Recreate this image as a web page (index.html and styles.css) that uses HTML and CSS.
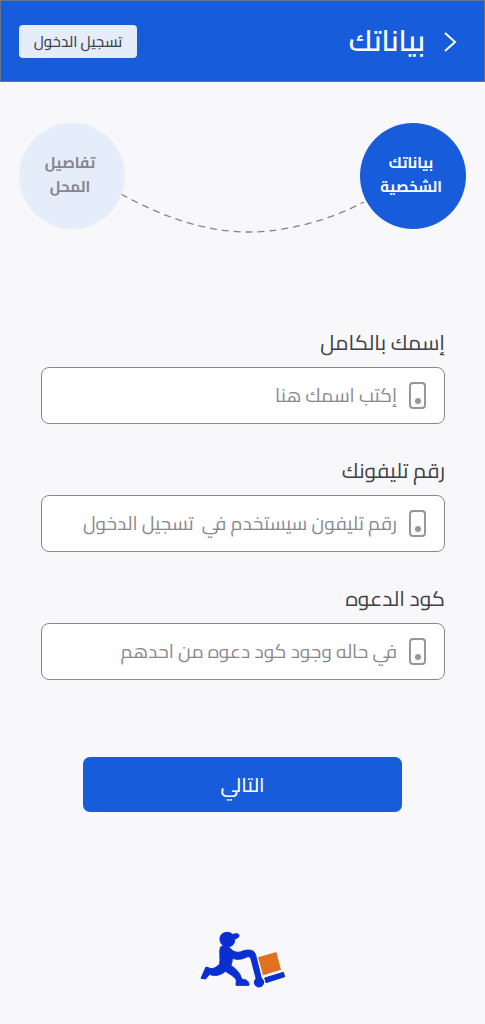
FILE: index.html
```html
<!DOCTYPE html>
<html lang="ar" dir="rtl">
<head>
  <meta charset="UTF-8" />
  <meta name="viewport" content="width=device-width, initial-scale=1.0" />
  <title>بياناتك</title>
  <link rel="stylesheet" href="styles.css">
</head>
<body>
  <header>
    <a href="#" class="back" aria-label="رجوع">
      <svg width="14" height="22" viewBox="0 0 14 22"><path d="M2 2 L12 11 L2 20" /></svg>
    </a>
    <h1>بياناتك</h1>
    <button type="button" class="login">تسجيل الدخول</button>
  </header>
  <main>
    <div class="steps">
      <div class="step active">بياناتك<br>الشخصية</div>
      <svg class="path" viewBox="0 0 248 44" preserveAspectRatio="none">
        <path d="M2 4 C46 28 88 42 130 42 C166 42 210 31 246 12" />
      </svg>
      <div class="step">تفاصيل<br>المحل</div>
    </div>
    <form>
      <label for="name">إسمك بالكامل</label>
      <div class="field">
        <svg width="18" height="28" viewBox="0 0 18 28"><rect x="2" y="1" width="15" height="25" rx="3" /><circle cx="10" cy="19" r="3" /></svg>
        <input type="text" id="name" placeholder="إكتب اسمك هنا">
      </div>
      <label for="phone">رقم تليفونك</label>
      <div class="field">
        <svg width="18" height="28" viewBox="0 0 18 28"><rect x="2" y="1" width="15" height="25" rx="3" /><circle cx="10" cy="19" r="3" /></svg>
        <input type="text" inputmode="tel" id="phone" placeholder="رقم تليفون سيستخدم في  تسجيل الدخول">
      </div>
      <label for="code">كود الدعوه</label>
      <div class="field">
        <svg width="18" height="28" viewBox="0 0 18 28"><rect x="2" y="1" width="15" height="25" rx="3" /><circle cx="10" cy="19" r="3" /></svg>
        <input type="text" id="code" placeholder="في حاله وجود كود دعوه من احدهم">
      </div>
      <button type="submit" class="next">التالي</button>
    </form>
  </main>
  <footer>
    <svg width="86" height="58" viewBox="33 33 258 174">
      <g fill="#0a2fd0" stroke="#0a2fd0" stroke-width="3" stroke-linejoin="round">
        <path d="M93 58 C92 45 102 37 115 37 C121 37 126 39 130 43 L143 41 C152 41 152 51 145 54 L137 57 C138 71 130 80 116 81 C101 80 94 71 93 58 Z" />
        <path d="M94 82 C103 74 118 77 126 88 C133 96 145 98 154 96 C166 90 181 88 192 93 C198 97 200 105 202 113 L217 174 L202 178 L187 121 C185 113 182 109 176 110 C163 116 151 120 138 117 L130 115 C130 125 127 131 126 137 C141 146 153 158 158 177 L171 180 C178 183 180 190 180 196 L141 196 L142 180 C135 168 123 163 109 154 C98 164 83 169 67 165 L61 163 L50 177 L36 175 L51 141 L60 144 C73 149 83 141 92 132 C95 117 90 97 94 82 Z" />
        <circle cx="210" cy="187" r="14" />
        <path d="M227 174 L283 157 L287 170 L231 188 Z" />
      </g>
      <path fill="#e2711f" d="M207 112 L262 96 L276 149 L222 166 Z" />
    </svg>
  </footer>
</body>
</html>
```

FILE: styles.css
```css
* {
  box-sizing: border-box;
}
body {
  margin: 0;
  background: #f8f8fb;
  color: #404045;
  font-family: Cairo, "DejaVu Sans", sans-serif;
}
button, input {
  font-family: inherit;
}
header {
  display: flex;
  align-items: center;
  height: 82px;
  padding: 0 27px 0 18px;
  background: #175cdb;
  border: 1px solid #66738f;
}
.back {
  display: flex;
  margin-top: 2px;
}
.back svg {
  fill: none;
  stroke: #fff;
  stroke-width: 2;
}
h1 {
  margin: 0 18px 0 auto;
  color: #fff;
  font-size: 29px;
  font-weight: 600;
  line-height: 40px;
}
.login {
  width: 118px;
  height: 33px;
  padding: 0;
  border: 0;
  border-radius: 4px;
  background: #e5edfb;
  color: #404045;
  font-size: 15px;
  font-weight: 500;
}
.steps {
  display: flex;
  justify-content: space-between;
  padding: 41px 19px 0;
}
.step {
  display: flex;
  flex: none;
  align-items: center;
  justify-content: center;
  width: 106px;
  height: 106px;
  padding: 0 4px 2px 0;
  border-radius: 50%;
  background: #e5edfb;
  color: #85868b;
  font-size: 15px;
  font-weight: 700;
  line-height: 24px;
  text-align: center;
}
.step.active {
  background: #175cdb;
  color: #fff;
}
.path {
  flex: 1;
  min-width: 0;
  height: 44px;
  margin: 67px -6px 0;
}
.path path {
  fill: none;
  stroke: #858588;
  stroke-width: 1.3;
  stroke-dasharray: 7 5;
}
form {
  display: flex;
  flex-direction: column;
  padding: 93px 40px 0 41px;
}
label {
  font-size: 21px;
  line-height: 32px;
  margin-bottom: 8px;
}
.field {
  display: flex;
  align-items: center;
  gap: 11px;
  height: 57px;
  margin-bottom: 31px;
  padding: 0 18px;
  background: #fff;
  border: 1px solid #89898c;
  border-radius: 8px;
}
.field svg {
  flex: none;
  fill: none;
  stroke: #97979a;
  stroke-width: 2;
}
.field circle {
  fill: #97979a;
  stroke: none;
}
.field input {
  flex: 1;
  min-width: 0;
  height: 40px;
  padding: 0 0 2px;
  border: 0;
  outline: none;
  background: none;
  color: #404045;
  font-size: 19px;
}
.field input::placeholder {
  color: #89898c;
  opacity: 1;
}
.next {
  height: 55px;
  margin: 46px 43px 0 42px;
  border: 0;
  border-radius: 7px;
  background: #175cdb;
  color: #fff;
  font-size: 20px;
  font-weight: 500;
}
footer {
  display: flex;
  justify-content: center;
  padding: 119px 0 32px;
}
```
